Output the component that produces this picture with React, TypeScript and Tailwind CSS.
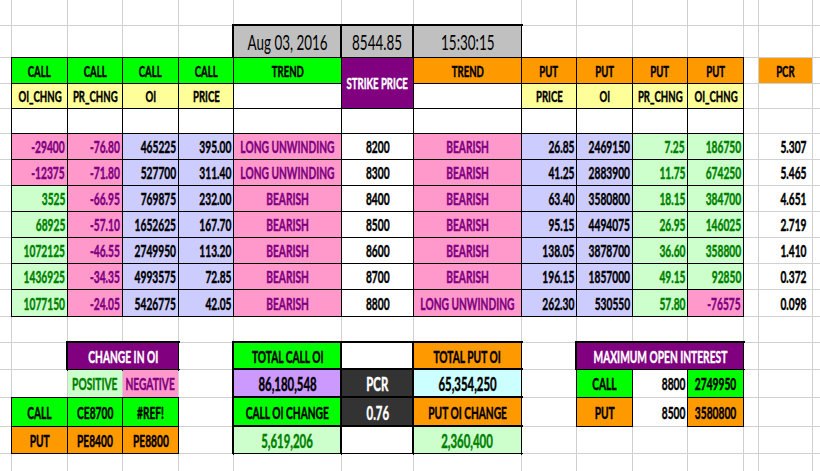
type Cell = { t?: string; c?: string; a?: "c" | "r"; s?: string; n?: boolean };

const B1 = "outline-1 outline-black";
const B2 = "outline-2 outline-black";
const GRN = "bg-[#00ff00] text-black";
const YEL = "bg-[#ffff99] text-black";
const ORA = "bg-[#ff9900] text-black";
const PUR = "bg-[#800080] text-white";
const PNK = "bg-[#ff99cc] text-[#800080]";
const LAV = "bg-[#ccccff] text-black";
const LGR = "bg-[#ccffcc] text-[#008000]";
const GRY = "bg-[#c0c0c0] text-black";
const DRK = "bg-[#333333] text-white";
const LIL = "bg-[#cc99ff] text-black";
const CYN = "bg-[#ccffff] text-black";
const WHT = "bg-white text-black";
const HD = "text-[16px]";

const E: Cell = {};
const blank = (n: number): Cell[] => Array.from({ length: n }, () => E);

// call oi_chng, pr_chng, oi, price, trend, strike, trend, put price, oi, pr_chng, oi_chng, pcr
const rows: string[][] = [
  ["-29400", "-76.80", "465225", "395.00", "LONG UNWINDING", "8200", "BEARISH", "26.85", "2469150", "7.25", "186750", "5.307"],
  ["-12375", "-71.80", "527700", "311.40", "LONG UNWINDING", "8300", "BEARISH", "41.25", "2883900", "11.75", "674250", "5.465"],
  ["3525", "-66.95", "769875", "232.00", "BEARISH", "8400", "BEARISH", "63.40", "3580800", "18.15", "384700", "4.651"],
  ["68925", "-57.10", "1652625", "167.70", "BEARISH", "8500", "BEARISH", "95.15", "4494075", "26.95", "146025", "2.719"],
  ["1072125", "-46.55", "2749950", "113.20", "BEARISH", "8600", "BEARISH", "138.05", "3878700", "36.60", "358800", "1.410"],
  ["1436925", "-34.35", "4993575", "72.85", "BEARISH", "8700", "BEARISH", "196.15", "1857000", "49.15", "92850", "0.372"],
  ["1077150", "-24.05", "5426775", "42.05", "BEARISH", "8800", "LONG UNWINDING", "262.30", "530550", "57.80", "-76575", "0.098"],
];

const sign = (v: string) => (v.startsWith("-") ? PNK : LGR);

const dataRow = (r: string[]): Cell[] => [
  E,
  { t: r[0], c: `${sign(r[0])} ${B1}`, a: "r" },
  { t: r[1], c: `${sign(r[1])} ${B1}`, a: "r" },
  { t: r[2], c: `${LAV} ${B1}`, a: "r" },
  { t: r[3], c: `${LAV} ${B1}`, a: "r" },
  { t: r[4], c: `${PNK} ${B1}` },
  { t: r[5], c: `${WHT} ${B1}` },
  { t: r[6], c: `${PNK} ${B1}` },
  { t: r[7], c: `${LAV} ${B1}`, a: "r" },
  { t: r[8], c: `${LAV} ${B1}`, a: "r" },
  { t: r[9], c: `${sign(r[9])} ${B1}`, a: "r" },
  { t: r[10], c: `${sign(r[10])} ${B1}`, a: "r" },
  E,
  { t: r[11], a: "r", s: "pr-[6px]" },
  E,
];

const cells: Cell[] = [
  // row 1
  ...blank(15),
  // row 2: date, spot, time
  ...blank(5),
  { t: "Aug 03, 2016", c: `${GRY} ${B2}`, s: "text-[21px] font-normal", n: true },
  { t: "8544.85", c: `${GRY} ${B2}`, s: "text-[21px] font-normal", n: true },
  { t: "15:30:15", c: `${GRY} ${B2}`, s: "text-[21px] font-normal", n: true },
  ...blank(7),
  // row 3: headers
  E,
  { t: "CALL", c: `${GRN} ${B1}`, s: HD },
  { t: "CALL", c: `${GRN} ${B1}`, s: HD },
  { t: "CALL", c: `${GRN} ${B1}`, s: HD },
  { t: "CALL", c: `${GRN} ${B1}`, s: HD },
  { t: "TREND", c: `${GRN} ${B1}`, s: HD },
  { t: "STRIKE PRICE", c: `${PUR} ${B1}`, s: `row-span-2 ${HD}` },
  { t: "TREND", c: `${ORA} ${B1}`, s: HD },
  { t: "PUT", c: `${ORA} ${B1}`, s: HD },
  { t: "PUT", c: `${ORA} ${B1}`, s: HD },
  { t: "PUT", c: `${ORA} ${B1}`, s: HD },
  { t: "PUT", c: `${ORA} ${B1}`, s: HD },
  E,
  { t: "PCR", c: ORA, s: HD },
  E,
  // row 4: sub headers
  E,
  { t: "OI_CHNG", c: `${YEL} ${B1}`, s: HD },
  { t: "PR_CHNG", c: `${YEL} ${B1}`, s: HD },
  { t: "OI", c: `${YEL} ${B1}`, s: HD },
  { t: "PRICE", c: `${YEL} ${B1}`, s: HD },
  { c: `${WHT} ${B1}` },
  { c: `${WHT} ${B1}` },
  { t: "PRICE", c: `${YEL} ${B1}`, s: HD },
  { t: "OI", c: `${YEL} ${B1}`, s: HD },
  { t: "PR_CHNG", c: `${YEL} ${B1}`, s: HD },
  { t: "OI_CHNG", c: `${YEL} ${B1}`, s: HD },
  ...blank(3),
  // row 5: empty bordered row
  E,
  ...Array.from({ length: 11 }, () => ({ c: `${WHT} ${B1}` })),
  ...blank(3),
  // data rows
  ...rows.flatMap(dataRow),
  // spacer row
  ...blank(15),
  // summary row 1
  E,
  E,
  { t: "CHANGE IN OI", c: `${PUR} ${B2}`, s: "col-span-2" },
  E,
  { t: "TOTAL CALL OI", c: `${GRN} ${B2}` },
  { c: `${WHT} ${B2}` },
  { t: "TOTAL PUT OI", c: `${ORA} ${B2}` },
  E,
  { t: "MAXIMUM OPEN INTEREST", c: `${PUR} ${B2}`, s: "col-span-3" },
  ...blank(3),
  // summary row 2
  E,
  E,
  { t: "POSITIVE", c: LGR },
  { t: "NEGATIVE", c: PNK },
  E,
  { t: "86,180,548", c: `${LIL} ${B2}`, s: "text-[19px]" },
  { t: "PCR", c: `${DRK} ${B2}`, s: "text-[19px]" },
  { t: "65,354,250", c: `${CYN} ${B2}`, s: "text-[19px]" },
  E,
  { t: "CALL", c: `${GRN} ${B1}` },
  { t: "8800", a: "r" },
  { t: "2749950", c: `${GRN} ${B1}` },
  ...blank(3),
  // summary row 3
  E,
  { t: "CALL", c: `${GRN} ${B1}` },
  { t: "CE8700", c: `${GRN} ${B1}` },
  { t: "#REF!", c: `${GRN} ${B1}` },
  E,
  { t: "CALL OI CHANGE", c: `${GRN} ${B2}` },
  { t: "0.76", c: `${DRK} ${B2}`, s: "text-[19px]" },
  { t: "PUT OI CHANGE", c: `${ORA} ${B2}` },
  E,
  { t: "PUT", c: `${ORA} ${B1}` },
  { t: "8500", a: "r" },
  { t: "3580800", c: `${ORA} ${B1}` },
  ...blank(3),
  // summary row 4
  E,
  { t: "PUT", c: `${ORA} ${B1}` },
  { t: "PE8400", c: `${ORA} ${B1}` },
  { t: "PE8800", c: `${ORA} ${B1}` },
  E,
  { t: "5,619,206", c: `${LGR} ${B2}`, s: "text-[19px]" },
  { c: `${WHT} ${B2}` },
  { t: "2,360,400", c: `${LGR} ${B2}`, s: "text-[19px]" },
  ...blank(7),
  // last row
  ...blank(15),
];

export default function App() {
  return (
    <div className="w-[820px] h-[471px] overflow-hidden bg-white">
      <div className="grid h-[471px] gap-px bg-[#d0d0d0] grid-cols-[11px_55px_54px_55px_54px_107px_71px_107px_54px_55px_54px_55px_14px_53px_1fr] grid-rows-[25px_31px_25px_24px_24px_25px_25px_25px_25px_25px_25px_26px_25px_26px_27px_28px_26px_1fr] font-['Lato','Open_Sans',sans-serif] font-bold text-[17px] leading-none text-black">
        {cells.map((cell, i) => (
          <div
            key={i}
            className={`flex items-center whitespace-nowrap ${cell.c ?? WHT} ${
              cell.a === "r" ? "justify-end pr-[2px]" : "justify-center"
            } ${cell.s ?? ""}`}
          >
            {cell.t && (
              <span
                className={`inline-block ${
                  cell.n ? "scale-x-[0.64]" : "scale-x-[0.6] [-webkit-text-stroke:0.45px]"
                } ${cell.a === "r" ? "origin-right" : "origin-center"}`}
              >
                {cell.t}
              </span>
            )}
          </div>
        ))}
      </div>
    </div>
  );
}
